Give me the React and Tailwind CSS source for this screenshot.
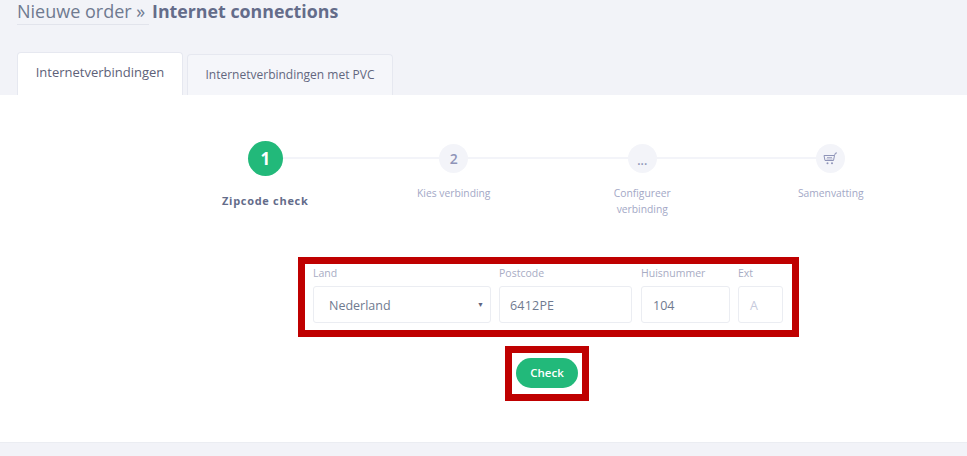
const sans = "font-['Open_Sans',sans-serif]";

function Cart() {
  return (
    <svg width="15" height="15" viewBox="0 0 15 15" fill="none" stroke="#8f94b8" strokeWidth="1">
      <path d="M1 4.5h10.5l-1 5h-8.5z" />
      <path d="M11.5 4.5l1-2.5h1.5" />
      <path d="M4 6.5h5M3.5 8h6" strokeWidth="0.7" />
      <circle cx="4.5" cy="12.3" r="1" fill="#8f94b8" stroke="none" />
      <circle cx="9" cy="12.3" r="1" fill="#8f94b8" stroke="none" />
    </svg>
  );
}

function Step({ label, children, last }) {
  return (
    <div className="relative flex w-[188.5px] flex-col items-center">
      {!last && <div className="absolute left-1/2 top-[13px] h-[2px] w-full bg-[#f3f4f9]" />}
      <div className="relative flex h-[29px] w-[29px] items-center justify-center rounded-full bg-[#f3f4f9] text-[14px] font-semibold text-[#8f94b8]">
        {children}
      </div>
      <div className="mt-[12px] w-[110px] text-center text-[10.3px] leading-[16px] text-[#a3a8c6]">{label}</div>
    </div>
  );
}

function Field({ label, className, children }) {
  return (
    <div className={className}>
      <div className="mb-[5px] h-[16px] text-[10.5px] leading-[16px] text-[#a8acc4]">{label}</div>
      <div className="flex h-[37px] items-center rounded-[3px] border border-[#ebedf2] bg-white pt-[3px] text-[12.5px] text-[#6f7a90]">
        {children}
      </div>
    </div>
  );
}

export default function App() {
  return (
    <div className={`${sans} h-[456px] w-[967px] overflow-hidden bg-[#f2f3f8]`}>
      <div className="h-[52px] pl-[17px]">
        <div className="flex items-baseline">
          <span className="w-[132px] border-b border-[#e2e4ec] pb-[1px] text-[18px] leading-[23px] text-[#6f7a90]">Nieuwe order »</span>
          <span className="ml-[3px] text-[17.8px] font-bold leading-[23px] text-[#646c8a]">Internet connections</span>
        </div>
      </div>
      <div className="flex h-[43px] items-end gap-[4px] pl-[17px]">
        <div className="flex h-[43px] w-[166px] items-center justify-center rounded-t-[4px] border border-b-0 border-[#e6e8f0] bg-white pb-[3px] text-[13px] font-medium text-[#5d6178]">
          Internetverbindingen
        </div>
        <div className="flex h-[41px] w-[206px] items-center justify-center rounded-t-[4px] border border-b-0 border-[#e6e8f0] bg-[#f5f6fa] text-[12px] font-medium text-[#62667e]">
          Internetverbindingen met PVC
        </div>
      </div>
      <div className="h-[348px] border-b border-[#ebedf2] bg-white pt-[46px]">
        <div className="ml-[171px] flex h-[76px]">
          <div className="relative flex w-[188.5px] flex-col items-center">
            <div className="absolute left-1/2 top-[16px] h-[2px] w-full bg-[#f3f4f9]" />
            <div className="relative flex h-[35px] w-[35px] items-center justify-center rounded-full bg-[#22b97a] text-[17px] font-bold text-white">1</div>
            <div className="mt-[17px] text-[11px] font-bold leading-[16px] tracking-[0.7px] text-[#646c8a]">Zipcode check</div>
          </div>
          <div className="pt-[3px]">
            <Step label="Kies verbinding">2</Step>
          </div>
          <div className="pt-[3px]">
            <Step label={<>Configureer<br />verbinding</>}>
              <span className="pt-[5px] text-[12px] leading-none">...</span>
            </Step>
          </div>
          <div className="pt-[3px]">
            <Step label="Samenvatting" last>
              <Cart />
            </Step>
          </div>
        </div>
        <div className="ml-[298px] mt-[40px] flex h-[80px] w-[501px] border-[7px] border-[#bf0000] pl-[8px] pt-[1px]">
          <Field label="Land" className="w-[178px]">
            <span className="flex-1 pl-[15px]">Nederland</span>
            <span className="mb-[2px] mr-[6px] text-[7px] text-[#5f6480]">▼</span>
          </Field>
          <Field label="Postcode" className="ml-[8px] w-[133px]">
            <span className="pl-[10px] tracking-[0.2px]">6412PE</span>
          </Field>
          <Field label="Huisnummer" className="ml-[9px] w-[89px]">
            <span className="pl-[11px]">104</span>
          </Field>
          <Field label="Ext" className="ml-[8px] w-[45px]">
            <span className="pl-[11px] text-[#c6cadc]">A</span>
          </Field>
        </div>
        <div className="ml-[505px] mt-[9px] flex h-[55px] w-[84px] items-center justify-center border-[7px] border-[#bf0000] pb-[2px]">
          <button className="h-[30px] w-[62px] rounded-full bg-[#22b97a] text-[11.5px] font-semibold text-white">Check</button>
        </div>
      </div>
    </div>
  );
}
